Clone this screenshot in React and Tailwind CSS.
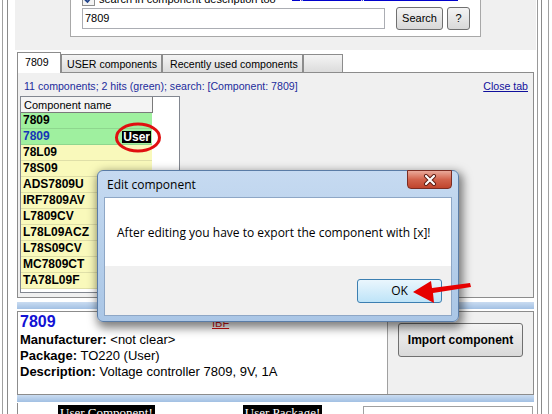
export default function App() {
  const rows = [
    { n: "7809", g: true },
    { n: "7809", g: true, blue: true, user: true },
    { n: "78L09" },
    { n: "78S09" },
    { n: "ADS7809U" },
    { n: "IRF7809AV" },
    { n: "L7809CV" },
    { n: "L78L09ACZ" },
    { n: "L78S09CV" },
    { n: "MC7809CT" },
    { n: "TA78L09F" },
  ];
  return (
    <div className="relative flex h-[414px] w-[552px] overflow-hidden bg-white font-['Liberation_Sans',Arial,sans-serif] text-black">
      {/* left window frame */}
      <div className="w-[2px] shrink-0" />
      <div className="w-px shrink-0 bg-[#a0a0a0]" />
      <div className="w-[4px] shrink-0" />
      <div className="w-px shrink-0 bg-[#8a8a8a]" />
      <div className="w-[7px] shrink-0" />

      <main className="flex w-[521px] shrink-0 flex-col">
        {/* search area */}
        <div className="h-[50px] shrink-0 bg-[#f0f0f0] pl-[55px]">
          <div className="-mt-3 flex h-[49px] w-[411px] flex-col border border-[#a8a8a8] bg-white pl-[11px] pt-[3px]">
            <div className="flex h-[14px] items-center text-[11px] leading-[14px]">
              <div className="flex h-[13px] w-[13px] items-center justify-center border border-[#8f8f8f] bg-[#f4f4f4]">
                <svg width="9" height="9" viewBox="0 0 9 9">
                  <path d="M1 4.5 L3.5 7 L8 1.5" stroke="#21458c" strokeWidth="1.8" fill="none" />
                </svg>
              </div>
              <span className="ml-[4px]">search in component description too</span>
              <span className="-mt-[9px] ml-auto mr-[22px] w-[166px] overflow-hidden whitespace-nowrap text-[#0000cc] underline">
                Open the component database online
              </span>
            </div>
            <div className="mt-[1px] flex h-[23px] items-center">
              <div className="h-[21px] w-[303px] border border-[#abadb3] bg-white pl-[2px] text-[11px] leading-[19px]">
                7809
              </div>
              <div className="ml-[11px] flex h-[23px] w-[47px] items-center justify-center rounded-[3px] border border-[#707070] bg-linear-to-b from-[#f4f4f4] to-[#d8d8d8] text-[11px]">
                Search
              </div>
              <div className="ml-[4px] flex h-[23px] w-[23px] items-center justify-center rounded-[3px] border border-[#707070] bg-linear-to-b from-[#f4f4f4] to-[#d8d8d8] text-[11px]">
                ?
              </div>
            </div>
          </div>
        </div>

        {/* tabs */}
        <div className="flex h-[22px] shrink-0 items-end pl-[2px] text-[10.6px] leading-[14px]">
          <div className="relative z-10 -mb-px flex h-[21px] w-[44px] items-center border border-b-0 border-[#8c8c8c] bg-white pb-[2px] pl-[7px]">
            7809
          </div>
          <div className="flex h-[18px] w-[101px] items-center border border-b-0 border-[#8c8c8c] bg-linear-to-b from-[#f4f4f4] to-[#dcdcdc] pl-[5px]">
            USER components
          </div>
          <div className="flex h-[18px] w-[141px] items-center border border-b-0 border-[#8c8c8c] bg-linear-to-b from-[#f4f4f4] to-[#dcdcdc] pl-[7px]">
            Recently used components
          </div>
          <div className="h-[18px] w-[40px] border border-b-0 border-[#8c8c8c] bg-linear-to-b from-[#f4f4f4] to-[#dcdcdc]" />
        </div>

        {/* tab panel */}
        <div className="ml-[2px] flex h-[226px] w-[517px] shrink-0 flex-col border border-[#8c8c8c] bg-[#f0f0f0] px-[2px]">
          <div className="mt-[6px] flex h-[14px] items-center justify-between pl-[4px] pr-[3px] text-[10.6px] leading-[14px]">
            <span className="text-[#1c2c9c]">11 components; 2 hits (green); search: [Component: 7809]</span>
            <span className="text-[#10109c] underline">Close tab</span>
          </div>
          <div className="mt-[3px] h-[197px] w-[160px] border border-[#828790] bg-white">
            <div className="flex h-[16px] w-[132px] items-center border-b border-r border-b-[#7a7a7a] border-r-[#7a7a7a] bg-[#f4f4f4] pl-[3px] text-[11px] leading-[14px]">
              Component name
            </div>
            {rows.map((r, i) => (
              <div
                key={i}
                className={
                  "flex h-[16px] w-[131px] items-center border-b border-black/10 pl-[2px] text-[12px] font-bold leading-[15px] " +
                  (r.g ? "bg-[#9ff09f]" : "bg-[#f9f9bb]") +
                  (r.blue ? " text-[#1636b8]" : "")
                }
              >
                <span>{r.n}</span>
                {r.user && (
                  <span className="ml-auto mr-[1px] bg-black px-[1px] text-[12px] leading-[12px] text-white">User</span>
                )}
              </div>
            ))}
          </div>
        </div>

        {/* splitter band */}
        <div className="ml-[2px] mt-[4px] h-[7px] w-[517px] shrink-0 bg-linear-to-b from-[#cadcf1] to-[#a2c0e3]" />

        {/* detail panel */}
        <div className="ml-[2px] mt-[2px] flex h-[84px] w-[517px] shrink-0 border border-[#8c8c8c]">
          <div className="flex w-[370px] flex-col border-r border-[#a0a0a0] bg-white pl-[2px]">
            <div className="flex h-[20px] items-baseline">
              <span className="w-[192px] text-[16px] font-bold leading-[20px] text-[#1212d4]">7809</span>
              <span className="text-[11px] leading-[20px] text-[#d01010] underline">IBF</span>
            </div>
            <div className="h-[16px] text-[13px] leading-[16px]">
              <b>Manufacturer:</b> &lt;not clear&gt;
            </div>
            <div className="h-[16px] text-[13px] leading-[16px]">
              <b>Package:</b> TO220 (User)
            </div>
            <div className="h-[16px] text-[13px] leading-[16px]">
              <b>Description:</b> Voltage controller 7809, 9V, 1A
            </div>
          </div>
          <div className="flex-1 bg-[#f0f0f0] pl-[10px] pt-[11px]">
            <div className="flex h-[34px] w-[125px] items-center justify-center rounded-[3px] border border-[#707070] bg-linear-to-b from-[#f4f4f4] to-[#d9d9d9] text-[12px] font-bold">
              Import component
            </div>
          </div>
        </div>

        <div className="ml-[2px] h-[7px] w-[517px] shrink-0 bg-linear-to-b from-[#cadcf1] to-[#a2c0e3]" />

        {/* bottom row */}
        <div className="ml-[2px] mt-[1px] flex h-[20px] w-[517px] shrink-0 border-l border-[#8c8c8c] pt-[2px]">
          <span className="ml-[40px] h-[16px] bg-black px-[2px] font-['Liberation_Serif',serif] text-[13px] leading-[16px] text-white">
            User Component!
          </span>
          <span className="ml-[88px] h-[16px] bg-black px-[2px] font-['Liberation_Serif',serif] text-[13px] leading-[16px] text-white">
            User Package!
          </span>
          <div className="ml-auto mr-[1px] mt-[1px] h-[20px] w-[170px] border border-[#a0a0a0] bg-white" />
        </div>
      </main>

      {/* right window frame */}
      <div className="w-px shrink-0" />
      <div className="w-px shrink-0 bg-[#9a9a9a]" />
      <div className="w-[3px] shrink-0" />
      <div className="w-px shrink-0 bg-[#8a8a8a]" />
      <div className="w-[6px] shrink-0" />
      <div className="w-px shrink-0 bg-[#a0a0a0]" />
      <div className="w-[3px] shrink-0" />

      {/* red ellipse annotation */}
      <svg className="absolute left-[114px] top-[121px]" width="48" height="34" viewBox="0 0 48 34">
        <ellipse cx="24" cy="16.5" rx="21.5" ry="13.5" stroke="#e01010" strokeWidth="3" fill="none" />
      </svg>

      {/* dialog */}
      <div className="absolute left-[97px] top-[170px] flex h-[152px] w-[362px] flex-col rounded-[6px] border border-[#5a7ca6] bg-linear-to-b from-[#c6daf1] via-[#b7d0eb] to-[#aac6e6] px-[6px] pb-[5px] font-['Open_Sans','Noto_Sans',sans-serif] shadow-[2px_4px_10px_2px_rgba(0,0,0,0.5)]">
        <div className="flex h-[26px] items-start justify-between">
          <span className="pl-[3px] pt-[5px] text-[12px] leading-[17px]">Edit component</span>
          <div className="-mt-px flex h-[19px] w-[45px] items-center justify-center rounded-b-[4px] border border-[#7b2c22] bg-linear-to-b from-[#e9a99a] via-[#d2634c] to-[#c0442c]">
            <svg width="14" height="12" viewBox="0 0 14 12">
              <path d="M3 2 L11 10 M11 2 L3 10" stroke="#5a1a10" strokeWidth="4" strokeLinecap="round" />
              <path d="M3 2 L11 10 M11 2 L3 10" stroke="#ffffff" strokeWidth="2.2" strokeLinecap="round" />
            </svg>
          </div>
        </div>
        <div className="flex flex-1 flex-col border border-[#8ea7c6]">
          <div className="flex h-[68px] items-center bg-white pl-[12px] pt-[1px] text-[12px]">
            After editing you have to export the component with [x]!
          </div>
          <div className="flex flex-1 items-start justify-end bg-[#f0f0f0] pr-[9px] pt-[13px]">
            <div className="flex h-[24px] w-[85px] items-center justify-center rounded-[3px] border border-[#3c7fb1] bg-linear-to-b from-[#eaf6fd] to-[#bee4f8] text-[12px]">
              OK
            </div>
          </div>
        </div>
      </div>

      {/* red arrow annotation */}
      <svg className="absolute left-[410px] top-[278px]" width="64" height="30" viewBox="0 0 64 30">
        <polygon points="3,14 21,3 22,10 60,5 61,9 23,15 24,25" fill="#e60000" />
      </svg>
    </div>
  );
}
